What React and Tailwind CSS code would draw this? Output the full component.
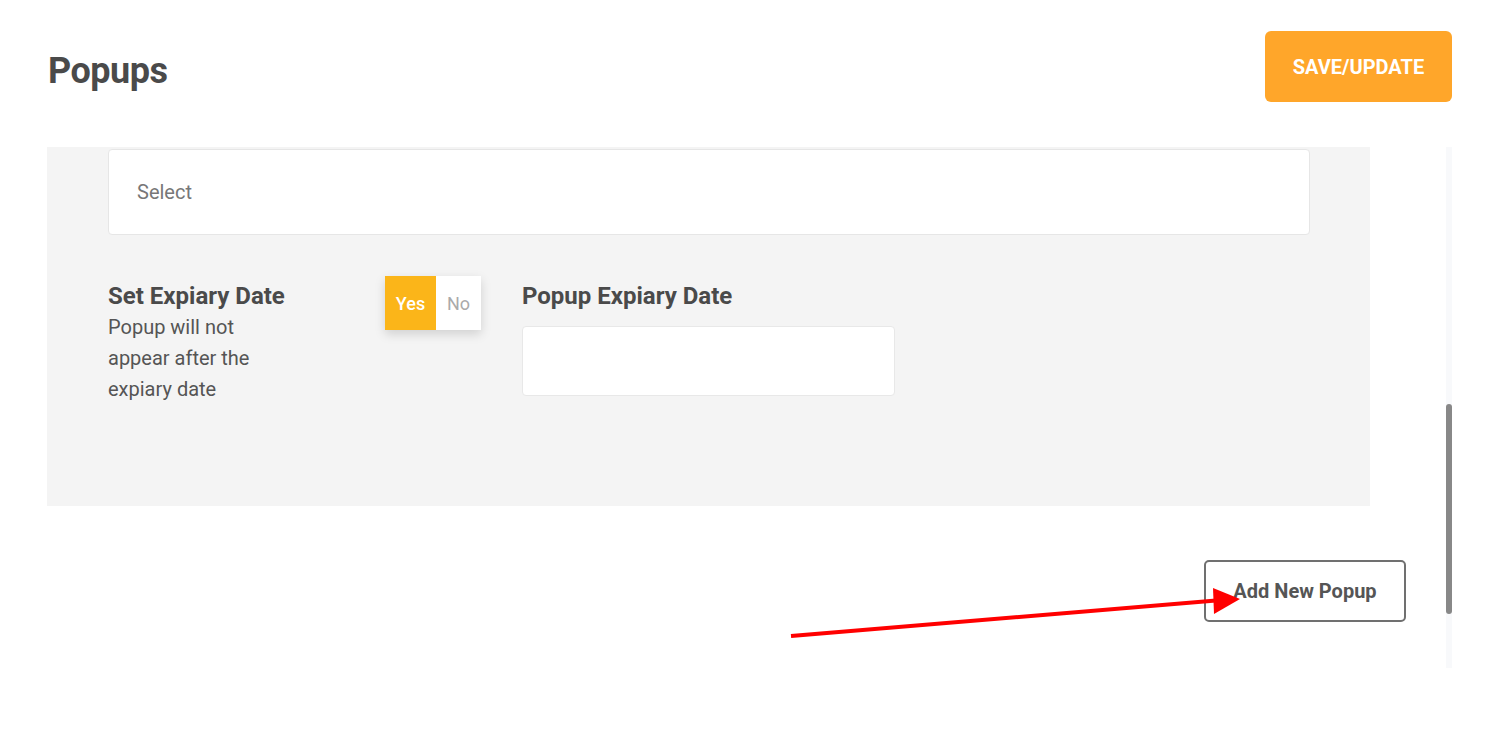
const Toggle = () => {
  return (
    <div className="flex h-[54px] shadow-[0_4px_10px_rgba(0,0,0,0.15)]">
      <span className="flex w-[51px] items-center justify-center bg-[#fbb519] text-[18px] font-medium text-white">
        Yes
      </span>
      <span className="flex w-[45px] items-center justify-center bg-white text-[18px] text-[#aaaaaa]">
        No
      </span>
    </div>
  );
};

const App = () => {
  return (
    <div className="relative h-[742px] w-full overflow-hidden bg-white font-['Roboto','Noto_Sans',sans-serif] text-[#4a4a4a]">
      <header className="flex items-start justify-between pl-[48px] pr-[54px] pt-[31px]">
        <h1 className="mt-[22px] text-[36px] font-bold leading-none tracking-[-0.5px] text-[#4a4a4a]">
          Popups
        </h1>
        <button className="flex h-[71px] w-[187px] items-center justify-center rounded-[6px] bg-[#ffa62a] text-[20px] font-bold text-white">
          SAVE/UPDATE
        </button>
      </header>

      <div className="mt-[45px] flex pl-[47px]">
        <div className="w-[1359px]">
          <section className="h-[359px] w-[1323px] bg-[#f4f4f4] pl-[61px] pr-[60px] pt-[2px]">
            <div className="flex h-[86px] items-center rounded-[4px] border border-[#e6e6e6] bg-white pl-[28px] text-[20px] text-[#777777]">
              Select
            </div>

            <div className="mt-[41px] flex items-start">
              <div className="mt-[6px] w-[277px]">
                <p className="whitespace-nowrap text-[24px] font-bold leading-[28px] text-[#4a4a4a]">Set Expiary Date</p>
                <p className="mt-[2px] max-w-[160px] text-[20px] leading-[31px] text-[#555555]">
                  Popup will not appear after the expiary date
                </p>
              </div>
              <Toggle />
              <div className="ml-[41px] mt-[6px]">
                <p className="text-[24px] font-bold leading-[28px] text-[#4a4a4a]">Popup Expiary Date</p>
                <div className="mt-[16px] h-[70px] w-[373px] rounded-[4px] border border-[#e8e8e8] bg-white" />
              </div>
            </div>
          </section>

          <div className="mt-[54px] flex justify-end">
            <button className="flex h-[62px] w-[202px] items-center justify-center rounded-[5px] border-2 border-[#707070] bg-white text-[20px] font-bold text-[#555555]">
              Add New Popup
            </button>
          </div>
        </div>

        <div className="ml-[40px] h-[521px] w-[6px] bg-[#f8f9fb]">
          <div className="mt-[257px] h-[210px] w-[6px] rounded-full bg-[#888888]" />
        </div>
      </div>

      {/* annotation arrow */}
      <svg className="pointer-events-none absolute left-0 top-0" width="1506" height="742">
        <line x1="791" y1="636" x2="1222" y2="600" stroke="#ff0000" strokeWidth="4" />
        <polygon points="1213,588 1240,599 1214,614" fill="#ff0000" />
      </svg>
    </div>
  );
};

export default App;
